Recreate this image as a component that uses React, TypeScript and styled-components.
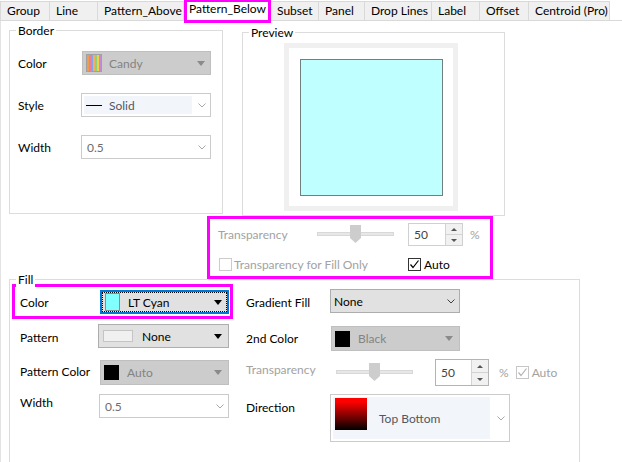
import React from 'react'
import styled, { createGlobalStyle, css } from 'styled-components'

// =============================================================================
// BASE
// =============================================================================

const FONT = `Lato, 'Noto Sans', 'Liberation Sans', sans-serif`
const MAGENTA = '#ff00ff'

const GlobalStyle = createGlobalStyle`
  html, body {
    margin: 0;
    padding: 0;
    background: #ffffff;
  }
  * {
    box-sizing: border-box;
  }
`

const Dialog = styled.div`
  width: 622px;
  height: 462px;
  overflow: hidden;
  background: #ffffff;
  font-family: ${FONT};
  font-size: 12px;
  color: #000000;
  display: flex;
  flex-direction: column;
`

// =============================================================================
// TABS
// =============================================================================

const TabStrip = styled.div`
  display: flex;
  align-items: flex-end;
  height: 21px;
  flex-shrink: 0;
  border-bottom: 1px solid #d9d9d9;
`

const Tab = styled.div<{ $w: number; $active?: boolean }>`
  width: ${({ $w }) => $w}px;
  height: 19px;
  padding-left: 6px;
  line-height: 18px;
  white-space: nowrap;
  background: #f0f0f0;
  border-top: 1px solid #d9d9d9;
  border-right: 1px solid #d9d9d9;
  &:first-child {
    border-left: 1px solid #d9d9d9;
  }
  ${({ $active }) =>
    $active &&
    css`
      position: relative;
      z-index: 2;
      height: 24px;
      margin-bottom: -3px;
      padding-left: 0;
      text-align: center;
      line-height: 14px;
      background: #ffffff;
      border: 3px solid ${MAGENTA};
    `}
`

const TABS: { name: string; w: number }[] = [
  { name: 'Group', w: 50 },
  { name: 'Line', w: 48 },
  { name: 'Pattern_Above', w: 86 },
  { name: 'Pattern_Below', w: 87 },
  { name: 'Subset', w: 48 },
  { name: 'Panel', w: 46 },
  { name: 'Drop Lines', w: 67 },
  { name: 'Label', w: 48 },
  { name: 'Offset', w: 49 },
  { name: 'Centroid (Pro)', w: 81 },
]

// =============================================================================
// LAYOUT
// =============================================================================

const Panel = styled.div`
  flex: 1;
  min-height: 0;
  display: flex;
  flex-direction: column;
  border-left: 1px solid #e3e3e3;
`

const TopRow = styled.div`
  display: flex;
  align-items: flex-start;
  gap: 19px;
  padding-left: 8px;
`

const GroupBox = styled.div<{ $w: number; $h: number; $top?: number; $left?: number }>`
  position: relative;
  flex-shrink: 0;
  width: ${({ $w }) => $w}px;
  height: ${({ $h }) => $h}px;
  margin-top: ${({ $top = 0 }) => $top}px;
  margin-left: ${({ $left = 0 }) => $left}px;
  border: 1px solid #dcdcdc;
`

const Caption = styled.span`
  position: absolute;
  top: -8px;
  left: 6px;
  padding: 0 2px;
  line-height: 15px;
  background: #ffffff;
`

const FormGrid = styled.div`
  display: grid;
  grid-template-columns: 63px 130px;
  grid-auto-rows: 24px;
  row-gap: 18px;
  align-items: center;
  padding: 20px 0 0 8px;
`

const FieldLabel = styled.span<{ $muted?: boolean; $nudge?: number }>`
  white-space: nowrap;
  color: ${({ $muted }) => ($muted ? '#a2a2a2' : '#000000')};
  margin-top: ${({ $nudge = 0 }) => $nudge}px;
`

// =============================================================================
// COMBO BOXES
// =============================================================================

type ComboVariant = 'disabled' | 'raised' | 'flat' | 'focused'

const Combo = styled.div<{ $variant: ComboVariant; $w: number; $h: number; $ml?: number }>`
  display: flex;
  align-items: center;
  width: ${({ $w }) => $w}px;
  height: ${({ $h }) => $h}px;
  margin-left: ${({ $ml = 0 }) => $ml}px;
  white-space: nowrap;
  ${({ $variant }) => {
    switch ($variant) {
      case 'disabled':
        return css`
          background: #cccccc;
          border: 1px solid #bfbfbf;
          color: #838383;
        `
      case 'raised':
        return css`
          background: #e1e1e1;
          border: 1px solid #adadad;
          color: #000000;
        `
      case 'focused':
        return css`
          background: #e1e1e1;
          border: 2px solid #0078d7;
          outline: 1px dotted #000000;
          outline-offset: -3px;
          color: #000000;
        `
      default:
        return css`
          background: #ffffff;
          border: 1px solid #cbcbcb;
          color: #6d6d6d;
        `
    }
  }}
`

const ComboText = styled.span<{ $ml?: number; $color?: string }>`
  margin-left: ${({ $ml = 0 }) => $ml}px;
  ${({ $color }) => $color && `color: ${$color};`}
`

const SelectedArea = styled.div<{ $w: number }>`
  display: flex;
  align-items: center;
  align-self: stretch;
  width: ${({ $w }) => $w}px;
  margin: 2px;
  background: #f2f5fa;
`

const Swatch = styled.span<{ $w: number; $h: number; $bg: string; $edge?: string; $ml?: number }>`
  flex-shrink: 0;
  width: ${({ $w }) => $w}px;
  height: ${({ $h }) => $h}px;
  margin-left: ${({ $ml = 0 }) => $ml}px;
  background: ${({ $bg }) => $bg};
  border: 1px solid ${({ $edge = '#000000' }) => $edge};
`

const GradientSwatch = styled.span`
  flex-shrink: 0;
  align-self: flex-start;
  width: 32px;
  height: 32px;
  margin: 1px 0 0 2px;
  background: linear-gradient(#ff0000 12%, #000000 100%);
`

const Triangle = styled.span<{ $color: string; $mr: number }>`
  margin-left: auto;
  margin-right: ${({ $mr }) => $mr}px;
  width: 0;
  height: 0;
  border-left: 4.5px solid transparent;
  border-right: 4.5px solid transparent;
  border-top: 5px solid ${({ $color }) => $color};
`

const ChevronWrap = styled.span<{ $mr: number }>`
  display: flex;
  margin-left: auto;
  margin-right: ${({ $mr }) => $mr}px;
`

const Chevron = ({ color = '#a8a8a8', mr = 4 }: { color?: string; mr?: number }) => (
  <ChevronWrap $mr={mr}>
    <svg width="8" height="5" viewBox="0 0 8 5">
      <polyline points="0.5,0.5 4,4 7.5,0.5" fill="none" stroke={color} strokeWidth="1" />
    </svg>
  </ChevronWrap>
)

const CANDY = ['#f39a4c', '#e57fa0', '#7fa6e6', '#f0b060', '#8fd07a', '#f2d04a', '#c68ad8']

const CandyIcon = () => (
  <svg width="16" height="18" viewBox="0 0 16 18" style={{ marginLeft: 3, flexShrink: 0 }}>
    <rect x="0.5" y="0.5" width="15" height="17" fill="#ffffff" stroke="#a0a0a0" />
    {CANDY.map((c, i) => (
      <rect key={c} x={1 + i * 2} y={1} width={2} height={16} fill={c} />
    ))}
  </svg>
)

const LineSample = styled.span`
  flex-shrink: 0;
  width: 16px;
  height: 1px;
  margin-left: 2px;
  background: #000000;
`

// =============================================================================
// SLIDER / SPIN / CHECKBOX
// =============================================================================

const Slider = ({ width }: { width: number }) => (
  <svg width={width} height={19} viewBox={`0 0 ${width} 19`} style={{ flexShrink: 0 }}>
    <rect x="0.5" y="7.5" width={width - 1} height="3" fill="#e7e7e7" stroke="#d8d8d8" />
    <path d="M33 0 H44 V13 L38.5 18 L33 13 Z" fill="#cdcdcd" />
  </svg>
)

const SpinBox = styled.div<{ $w: number; $h: number; $edge: string }>`
  display: flex;
  flex-shrink: 0;
  width: ${({ $w }) => $w}px;
  height: ${({ $h }) => $h}px;
  background: #ffffff;
  border: 1px solid ${({ $edge }) => $edge};
`

const SpinValue = styled.span`
  flex: 1;
  display: flex;
  align-items: center;
  padding-left: 5px;
  color: #444444;
`

const SpinButtons = styled.div`
  display: flex;
  flex-direction: column;
  width: 17px;
  border-left: 1px solid #d3d3d3;
`

const SpinButton = styled.div<{ $down?: boolean }>`
  flex: 1;
  display: flex;
  align-items: center;
  justify-content: center;
  background: #f1f1f1;
  & + & {
    border-top: 1px solid #d3d3d3;
  }
  &::after {
    content: '';
    width: 0;
    height: 0;
    border-left: 3px solid transparent;
    border-right: 3px solid transparent;
    ${({ $down }) => ($down ? 'border-top: 3px solid #555555;' : 'border-bottom: 3px solid #555555;')}
  }
`

const Spin = ({ w, h, edge }: { w: number; h: number; edge: string }) => (
  <SpinBox $w={w} $h={h} $edge={edge}>
    <SpinValue>50</SpinValue>
    <SpinButtons>
      <SpinButton />
      <SpinButton $down />
    </SpinButtons>
  </SpinBox>
)

const CheckRow = styled.label<{ $muted?: boolean; $gap?: number }>`
  display: flex;
  align-items: center;
  gap: ${({ $gap = 3 }) => $gap}px;
  white-space: nowrap;
  color: ${({ $muted }) => ($muted ? '#a2a2a2' : '#000000')};
`

const CheckBox = styled.span<{ $edge: string }>`
  display: flex;
  flex-shrink: 0;
  width: 13px;
  height: 13px;
  background: #ffffff;
  border: 1px solid ${({ $edge }) => $edge};
`

const Check = ({ checked, edge, mark }: { checked?: boolean; edge: string; mark?: string }) => (
  <CheckBox $edge={edge}>
    {checked && (
      <svg width="11" height="11" viewBox="0 0 11 11">
        <polyline points="1.5,5.5 4,8.5 9.5,1.5" fill="none" stroke={mark} strokeWidth="1.2" />
      </svg>
    )}
  </CheckBox>
)

const Percent = styled.span`
  color: #a2a2a2;
`

// =============================================================================
// TRANSPARENCY (PREVIEW) BOX
// =============================================================================

const TransparencyBox = styled.div`
  display: grid;
  grid-template-columns: 99px 91px 62px auto;
  grid-template-rows: 23px 23px;
  row-gap: 7px;
  align-items: center;
  width: 286px;
  height: 64px;
  margin-left: 206px;
  padding: 4px 0 0 8px;
  border: 3px solid ${MAGENTA};
`

const SpanTwo = styled.div`
  grid-column: span 2;
  padding-left: 1px;
`

const PreviewFrame = styled.div`
  display: flex;
  width: 174px;
  height: 168px;
  margin: 10px 0 0 41px;
  padding: 11px 10px 10px 11px;
  border: 5px solid #f0f0f0;
  background: #ffffff;
`

const PreviewFill = styled.div`
  flex: 1;
  background: #c0ffff;
  border: 1px solid #708080;
`

// =============================================================================
// FILL GROUP
// =============================================================================

const FillBody = styled.div`
  display: flex;
  gap: 13px;
  padding: 4px 0 0 2px;
`

const FillColumn = styled.div<{ $w?: number; $top?: number }>`
  display: flex;
  flex-direction: column;
  ${({ $w }) => $w && `width: ${$w}px;`}
  padding-top: ${({ $top = 0 }) => $top}px;
`

const LeftRow = styled.div<{ $top?: number }>`
  display: grid;
  grid-template-columns: 78px auto;
  align-items: center;
  padding-left: 8px;
  margin-top: ${({ $top = 0 }) => $top}px;
`

const HighlightRow = styled.div`
  display: grid;
  grid-template-columns: 80px auto;
  align-items: center;
  width: 221px;
  padding: 3px 1px 2px 5px;
  border: 3px solid ${MAGENTA};
`

const RightRow = styled.div<{ $top?: number; $start?: boolean }>`
  display: grid;
  grid-template-columns: 84px auto;
  align-items: ${({ $start }) => ($start ? 'start' : 'center')};
  margin-top: ${({ $top = 0 }) => $top}px;
`

const InlineControls = styled.div`
  display: flex;
  align-items: center;
`

const Gap = styled.span<{ $w: number }>`
  flex-shrink: 0;
  width: ${({ $w }) => $w}px;
`

// =============================================================================
// APP
// =============================================================================

export default function App() {
  return (
    <>
      <GlobalStyle />
      <Dialog>
        <TabStrip>
          {TABS.map((t) => (
            <Tab key={t.name} $w={t.w} $active={t.name === 'Pattern_Below'}>
              {t.name}
            </Tab>
          ))}
        </TabStrip>

        <Panel>
          <TopRow>
            <GroupBox $w={214} $h={184} $top={9}>
              <Caption>Border</Caption>
              <FormGrid>
                <FieldLabel>Color</FieldLabel>
                <Combo $variant="disabled" $w={129} $h={24} $ml={1}>
                  <CandyIcon />
                  <ComboText $ml={7}>Candy</ComboText>
                  <Triangle $color="#8a8a8a" $mr={5} />
                </Combo>

                <FieldLabel>Style</FieldLabel>
                <Combo $variant="flat" $w={130} $h={24}>
                  <SelectedArea $w={108}>
                    <LineSample />
                    <ComboText $ml={7} $color="#555560">
                      Solid
                    </ComboText>
                  </SelectedArea>
                  <Chevron />
                </Combo>

                <FieldLabel>Width</FieldLabel>
                <Combo $variant="flat" $w={130} $h={24}>
                  <ComboText $ml={5}>0.5</ComboText>
                  <Chevron />
                </Combo>
              </FormGrid>
            </GroupBox>

            <GroupBox $w={263} $h={184} $top={11}>
              <Caption>Preview</Caption>
              <PreviewFrame>
                <PreviewFill />
              </PreviewFrame>
            </GroupBox>
          </TopRow>

          <TransparencyBox>
            <FieldLabel $muted>Transparency</FieldLabel>
            <Slider width={77} />
            <Spin w={55} h={23} edge="#d0d0d0" />
            <Percent>%</Percent>
            <SpanTwo>
              <CheckRow $muted $gap={2}>
                <Check edge="#cccccc" />
                Transparency for Fill Only
              </CheckRow>
            </SpanTwo>
            <CheckRow>
              <Check checked edge="#333333" mark="#000000" />
              Auto
            </CheckRow>
          </TransparencyBox>

          <GroupBox $w={571} $h={200} $left={8}>
            <Caption>Fill</Caption>
            <FillBody>
              <FillColumn $w={221}>
                <HighlightRow>
                  <FieldLabel>Color</FieldLabel>
                  <Combo $variant="focused" $w={129} $h={24}>
                    <Swatch $w={15} $h={18} $bg="#80ffff" $edge="#8c8c8c" $ml={3} />
                    <ComboText $ml={8}>LT Cyan</ComboText>
                    <Triangle $color="#000000" $mr={5} />
                  </Combo>
                </HighlightRow>

                <LeftRow $top={5}>
                  <FieldLabel $nudge={2}>Pattern</FieldLabel>
                  <Combo $variant="raised" $w={131} $h={24}>
                    <Swatch $w={30} $h={12} $bg="#f0f0f0" $edge="#c4c4c4" $ml={4} />
                    <ComboText $ml={9}>None</ComboText>
                    <Triangle $color="#000000" $mr={6} />
                  </Combo>
                </LeftRow>

                <LeftRow $top={12}>
                  <FieldLabel $nudge={-3}>Pattern Color</FieldLabel>
                  <Combo $variant="disabled" $w={129} $h={25} $ml={2}>
                    <Swatch $w={15} $h={15} $bg="#000000" $ml={3} />
                    <ComboText $ml={8}>Auto</ComboText>
                    <Triangle $color="#8a8a8a" $mr={6} />
                  </Combo>
                </LeftRow>

                <LeftRow $top={9}>
                  <FieldLabel $nudge={-8}>Width</FieldLabel>
                  <Combo $variant="flat" $w={130} $h={24} $ml={1}>
                    <ComboText $ml={5}>0.5</ComboText>
                    <Chevron />
                  </Combo>
                </LeftRow>
              </FillColumn>

              <FillColumn $top={5}>
                <RightRow>
                  <FieldLabel $nudge={2}>Gradient Fill</FieldLabel>
                  <Combo $variant="raised" $w={130} $h={24}>
                    <ComboText $ml={3}>None</ComboText>
                    <Chevron color="#404040" />
                  </Combo>
                </RightRow>

                <RightRow $top={13}>
                  <FieldLabel>2nd Color</FieldLabel>
                  <Combo $variant="disabled" $w={129} $h={25} $ml={1}>
                    <Swatch $w={15} $h={16} $bg="#000000" $ml={3} />
                    <ComboText $ml={8}>Black</ComboText>
                    <Triangle $color="#8a8a8a" $mr={6} />
                  </Combo>
                </RightRow>

                <RightRow $top={8}>
                  <FieldLabel $muted $nudge={-6}>
                    Transparency
                  </FieldLabel>
                  <InlineControls>
                    <Gap $w={6} />
                    <Slider width={77} />
                    <Gap $w={22} />
                    <Spin w={54} h={27} edge="#b4b4b4" />
                    <Gap $w={10} />
                    <Percent>%</Percent>
                    <Gap $w={7} />
                    <CheckRow $muted>
                      <Check checked edge="#c6c6c6" mark="#b4b4b4" />
                      Auto
                    </CheckRow>
                  </InlineControls>
                </RightRow>

                <RightRow $top={8} $start>
                  <FieldLabel $nudge={6}>Direction</FieldLabel>
                  <Combo $variant="flat" $w={180} $h={48}>
                    <SelectedArea $w={157}>
                      <GradientSwatch />
                      <ComboText $ml={12} $color="#555560">
                        Top Bottom
                      </ComboText>
                    </SelectedArea>
                    <Chevron />
                  </Combo>
                </RightRow>
              </FillColumn>
            </FillBody>
          </GroupBox>
        </Panel>
      </Dialog>
    </>
  )
}
